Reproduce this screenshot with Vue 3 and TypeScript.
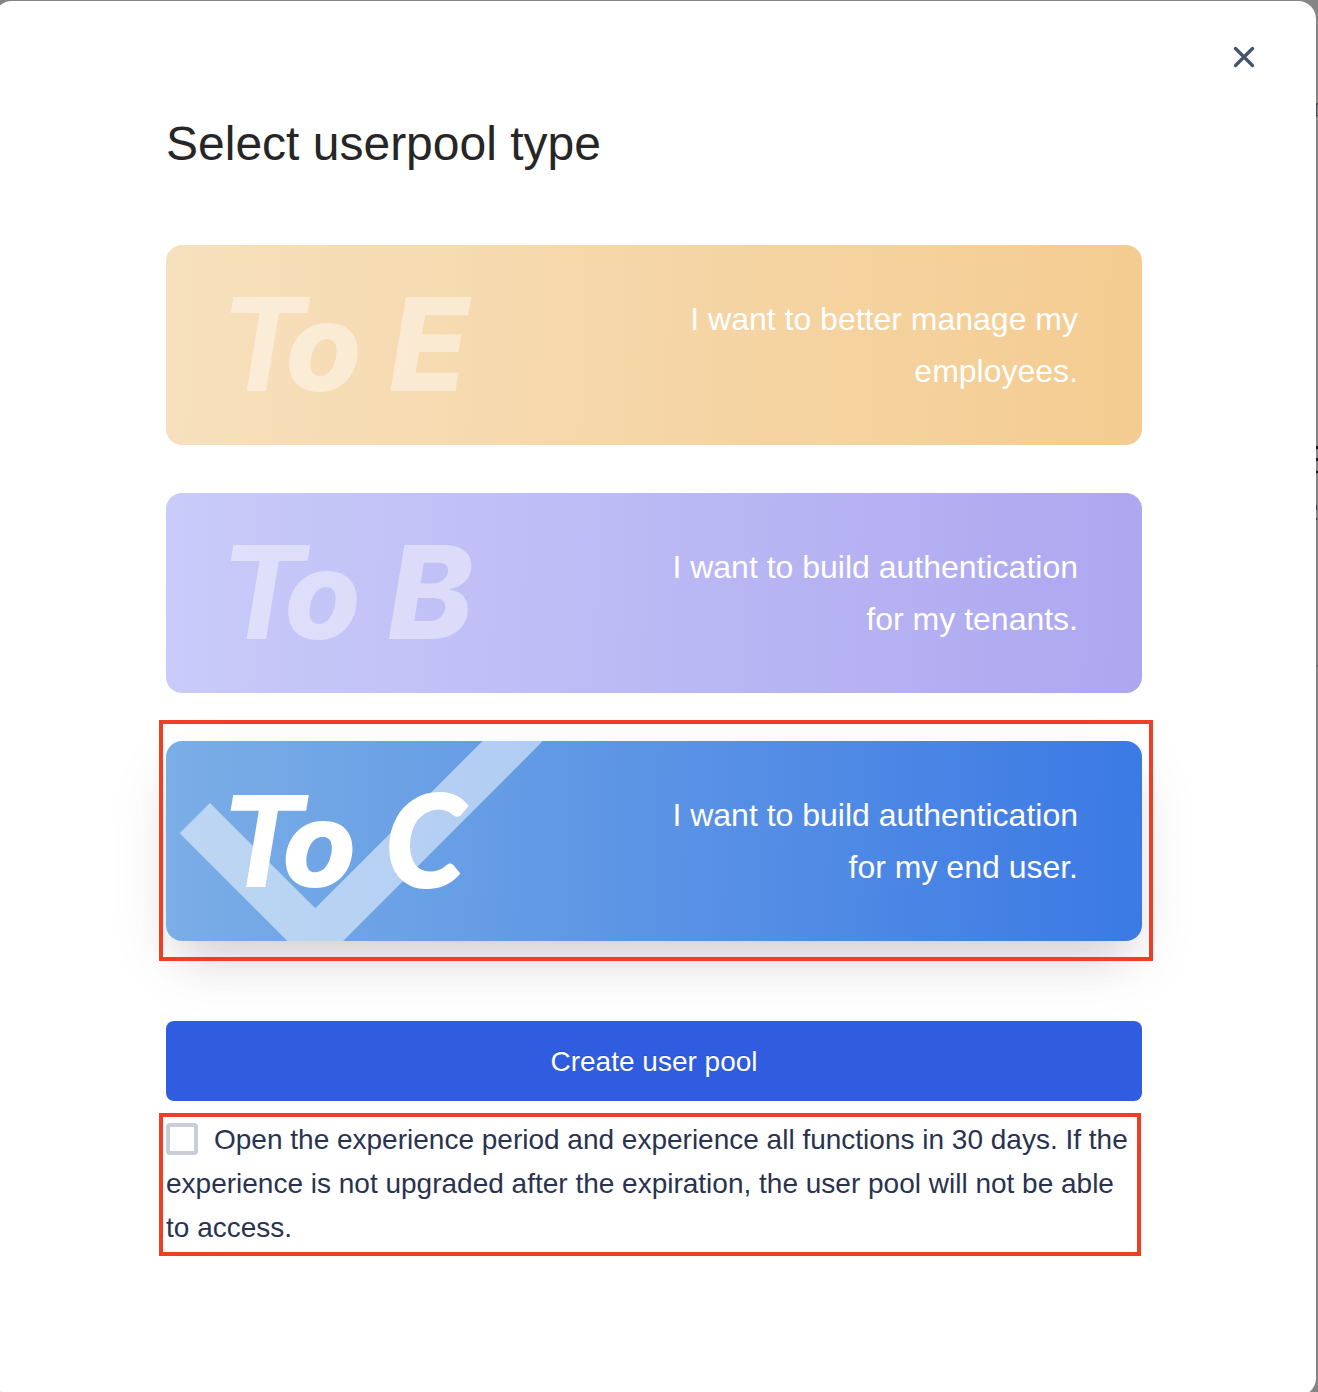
<script setup lang="ts">
import { ref } from 'vue'

interface Letter {
  char: string
  x: number
}

interface PoolType {
  id: string
  letters: Letter[]
  baseline: number
  size: number
  lines: string[]
}

const types: PoolType[] = [
  { id: 'e', letters: [{ char: 'T', x: 53 }, { char: 'o ', x: 119.5 }, { char: 'E', x: 223 }], baseline: 146, size: 129, lines: ['I want to better manage my', 'employees.'] },
  { id: 'b', letters: [{ char: 'T', x: 53 }, { char: 'o ', x: 118.5 }, { char: 'B', x: 221.5 }], baseline: 146, size: 129, lines: ['I want to build authentication', 'for my tenants.'] },
  { id: 'c', letters: [{ char: 'T', x: 53 }, { char: 'o ', x: 116 }, { char: 'C', x: 219.5 }], baseline: 146.3, size: 127, lines: ['I want to build authentication', 'for my end user.'] },
]
const selected = ref('c')
const trial = ref(false)
</script>

<template>
  <div class="backdrop">
    <main class="modal">
      <button class="close" aria-label="Close">
        <svg width="22" height="22" viewBox="0 0 22 22">
          <path d="M2.5 2.5 19.5 19.5M19.5 2.5 2.5 19.5" stroke="#475366" stroke-width="3.3" stroke-linecap="round" />
        </svg>
      </button>
      <h1>Select userpool type</h1>
      <div class="cards">
        <div v-for="t in types" :key="t.id" class="card" :class="[t.id, { active: selected === t.id }]" @click="selected = t.id">
          <svg class="art" width="400" height="200" viewBox="0 0 400 200">
            <path v-if="selected === t.id" d="M13.7 92.3 44 62 149.3 167.3 346.3-29.7 376.3.6 149.3 227.9Z" fill="#fff" fill-opacity=".5" />
            <text :y="t.baseline" :font-size="t.size"><tspan v-for="l in t.letters" :key="l.char" :x="l.x" :class="'glyph-' + l.char.trim()">{{ l.char }}</tspan></text>
          </svg>
          <p><span v-for="l in t.lines" :key="l">{{ l }}</span></p>
        </div>
        <div class="mark mark-card"></div>
      </div>
      <button class="create">Create user pool</button>
      <div class="trial">
        <label><span class="box" @click="trial = !trial"></span>Open the experience period and experience all functions in 30 days. If the<br>experience is not upgraded after the expiration, the user pool will not be able<br>to access.</label>
        <div class="mark mark-trial"></div>
      </div>
    </main>
    <svg class="behind" width="2" height="1392" viewBox="0 0 2 1392">
      <path d="M0 103h1v14H0zM0 103h2v2H0zM0 115h2v1H0z" fill="#4a4f58" />
      <path d="M0 446h2v3H0zM0 458h2v3H0zM0 471h2v2H0z" fill="#17181b" />
      <path d="M0 505h1v5H0zM0 518h1v2H0z" fill="#333c48" />
      <path d="M0 665h2v2H0z" fill="#707070" />
    </svg>
  </div>
</template>

<style>
body { margin: 0; overflow: hidden; }
</style>

<style scoped>
.backdrop {
  position: relative;
  box-sizing: border-box;
  width: 1318px;
  height: 1392px;
  padding-top: 1px;
  overflow: hidden;
  background: #858585;
  font-family: "Liberation Sans", Arial, sans-serif;
}
.modal {
  position: relative;
  box-sizing: border-box;
  width: 1322px;
  height: 1395px;
  margin-left: -6px;
  padding: 111px 174px 0 172px;
  border-radius: 18px;
  background: #fff;
}
.behind { position: absolute; top: 0; right: 0; }
button { border: 0; padding: 0; background: none; font: inherit; }
.close { position: absolute; top: 45px; right: 61px; width: 22px; height: 22px; }
.close svg { display: block; }
h1 { margin: 0 0 69px; height: 64px; line-height: 64px; font-size: 48px; font-weight: 400; color: #262626; }
.cards { position: relative; display: flex; flex-direction: column; gap: 48px; }
.card {
  position: relative;
  display: flex;
  align-items: center;
  justify-content: space-between;
  height: 200px;
  border-radius: 16px;
  overflow: hidden;
  color: #fff;
}
.card.e { background: linear-gradient(92deg, #f7e0bd, #f4cc91); }
.card.b { background: linear-gradient(92deg, #c9cbf9, #ada7f0); }
.card.c { background: linear-gradient(92deg, #7baee6, #3b79e4); }
.card.active { box-shadow: 0 26px 44px -18px rgba(0, 0, 0, .15), 0 24px 64px rgba(0, 0, 0, .08); }
.art { display: block; }
.art text { font-family: Inter, sans-serif; font-weight: 700; font-style: italic; fill: #fff; fill-opacity: .43; }
.active .art text { fill-opacity: 1; }
.art .glyph-o { font-size: 123px; font-weight: 800; }
.active .art .glyph-o { font-size: 120px; }
.art .glyph-E, .art .glyph-B { font-weight: 800; font-size: 129px; }
.art .glyph-C { font-family: Lato, sans-serif; font-weight: 900; stroke: #fff; stroke-width: 2px; }
p { display: flex; flex-direction: column; margin: 0 64px 0 0; text-align: right; font-size: 32px; line-height: 52px; }
.create {
  display: block;
  width: 976px;
  height: 80px;
  margin-top: 80px;
  border-radius: 8px;
  background: #305ddf;
  color: #fff;
  font-size: 28px;
  line-height: 82px;
  text-shadow: 0 -1px 1px rgba(0, 0, 0, .15);
}
.trial { position: relative; padding-top: 17px; }
.trial label { display: block; white-space: nowrap; font-size: 28px; line-height: 44px; color: #293350; }
.box {
  display: inline-block;
  box-sizing: border-box;
  width: 32px;
  height: 32px;
  margin-right: 16px;
  border: 4px solid #c9cdd6;
  border-radius: 4px;
  background: #fff;
  vertical-align: -6px;
}
.mark { position: absolute; box-sizing: border-box; border: 4px solid #ee3f26; pointer-events: none; }
.mark-card { left: -7px; right: -11px; bottom: -20px; height: 241px; }
.mark-trial { left: -7px; right: 1px; top: 12px; height: 143px; }
</style>
